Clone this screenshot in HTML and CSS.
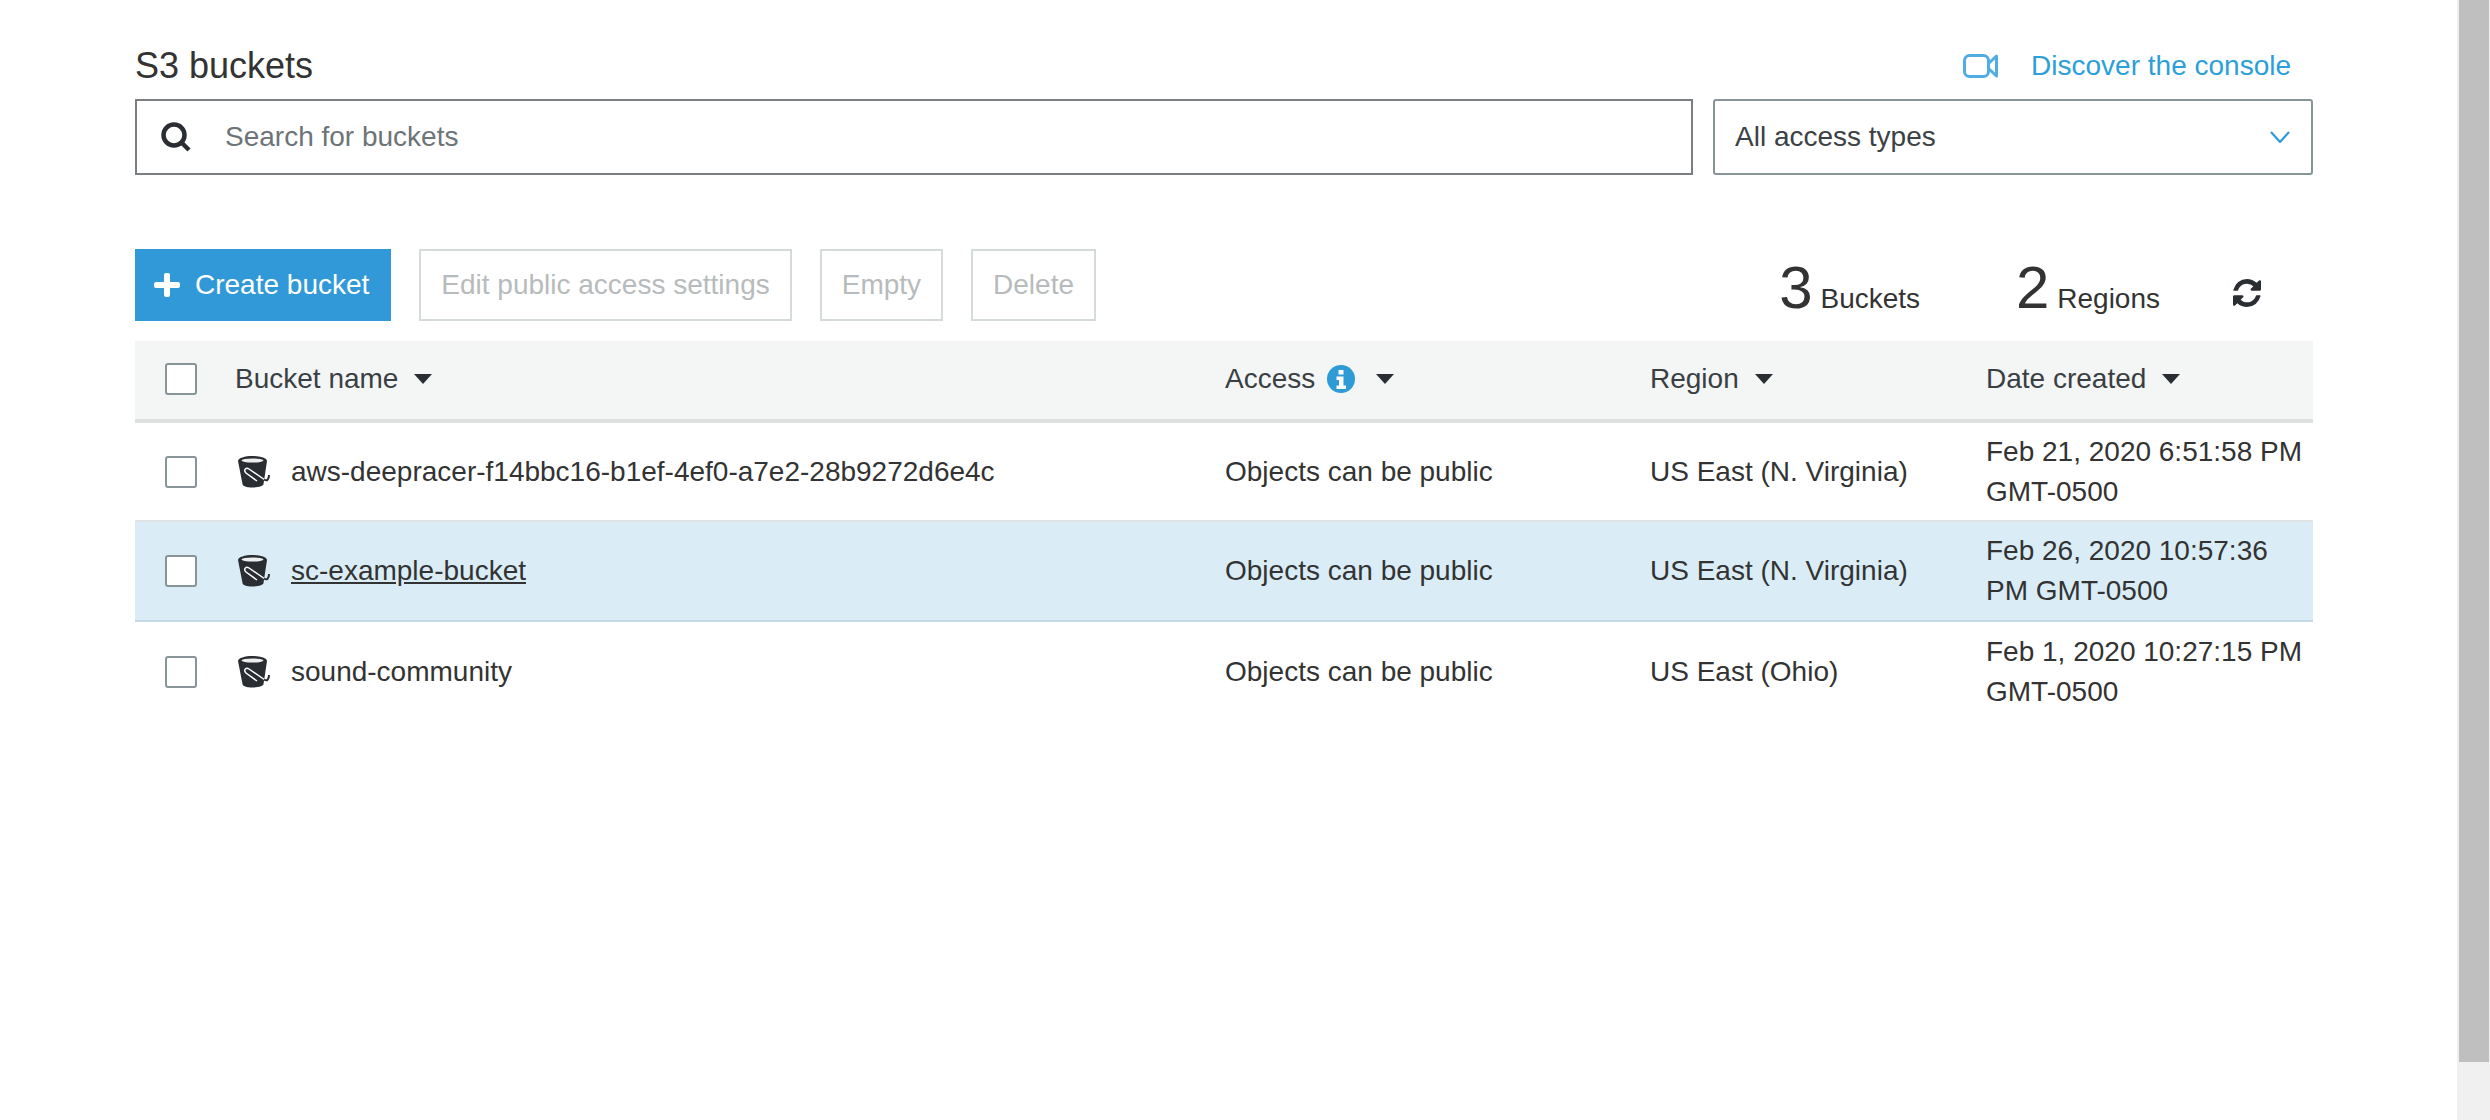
FILE: index.html
```html
<!DOCTYPE html>
<html lang="en">
<head>
    <meta charset="UTF-8">
    <link rel="stylesheet" href="styles.css">
    <title>S3 buckets</title>
</head>
<body>
    <main class="page">
        <div class="title-row">
            <h1 class="title">S3 buckets</h1>
            <a class="discover" href="#">
                <svg class="video-icon" viewBox="0 0 35 24" fill="none" stroke="#4fade2" stroke-width="3" stroke-linejoin="round">
                    <rect x="1.5" y="1.5" width="24" height="21" rx="5"/>
                    <path d="M33.500 2v20L25.500 14.500v-5z"/>
                </svg>
                Discover the console
            </a>
        </div>

        <div class="filters">
            <div class="search">
                <svg class="search-icon" viewBox="0 0 30 30" fill="none" stroke="#2a2e33">
                    <circle cx="13" cy="13" r="10.500" stroke-width="4.500"/>
                    <path d="M20 20l8 8" stroke-width="4.500"/>
                </svg>
                <input class="search-input" type="text" placeholder="Search for buckets">
            </div>
            <div class="select">
                <span>All access types</span>
                <svg class="chevron" viewBox="0 0 20 12" fill="none" stroke="#2e9ad6" stroke-width="2.200">
                    <path d="M1 1l9 10 9-10"/>
                </svg>
            </div>
        </div>

        <div class="toolbar">
            <button class="btn btn-primary">
                <svg class="plus-icon" viewBox="0 0 26 24" fill="#fff">
                    <path d="M10 2a2 2 0 0 1 2-2h2a2 2 0 0 1 2 2v7h8a2 2 0 0 1 2 2v2a2 2 0 0 1-2 2h-8v7a2 2 0 0 1-2 2h-2a2 2 0 0 1-2-2v-7H2a2 2 0 0 1-2-2v-2a2 2 0 0 1 2-2h8z"/>
                </svg>
                Create bucket
            </button>
            <button class="btn" disabled>Edit public access settings</button>
            <button class="btn" disabled>Empty</button>
            <button class="btn" disabled>Delete</button>
            <div class="stats">
                <div class="stat stat-buckets"><span class="stat-num">3</span> Buckets</div>
                <div class="stat stat-regions"><span class="stat-num">2</span> Regions</div>
                <svg class="refresh-icon" viewBox="128 128 1536 1536" fill="#2a2e33">
                    <path d="M1639 1056q0 5-1 7-64 268-268 434.500t-478 166.500q-146 0-282.500-55t-243.500-157l-129 129q-19 19-45 19t-45-19-19-45v-448q0-26 19-45t45-19h448q26 0 45 19t19 45-19 45l-137 137q71 66 161 102t187 36q134 0 250-65t186-179q11-17 53-117 8-23 30-23h192q13 0 22.500 9.500t9.500 22.500zm25-800v448q0 26-19 45t-45 19h-448q-26 0-45-19t-19-45 19-45l138-138q-148-137-349-137-134 0-250 65t-186 179q-11 17-53 117-8 23-30 23h-199q-13 0-22.500-9.500t-9.500-22.500v-7q65-268 270-434.500t480-166.500q146 0 284 55.500t245 156.500l130-129q19-19 45-19t45 19 19 45z"/>
                </svg>
            </div>
        </div>

        <div class="table">
            <div class="row row-head">
                <div class="cell-check"><span class="checkbox"></span></div>
                <div class="head-cell"><span>Bucket name</span><span class="caret"></span></div>
                <div class="head-cell">
                    <span>Access</span>
                    <svg class="info-icon" viewBox="0 0 28 28">
                        <circle cx="14" cy="14" r="14" fill="#2e9ad6"/>
                        <path fill="#fff" d="M11.500 5h5v4.500h-5zM9.500 11.500h7v9h2.500V24H9.500v-3.500H12v-5.500H9.500z"/>
                    </svg>
                    <span class="caret caret-info"></span>
                </div>
                <div class="head-cell"><span>Region</span><span class="caret"></span></div>
                <div class="head-cell"><span>Date created</span><span class="caret"></span></div>
            </div>

            <div class="row">
                <div class="cell-check"><span class="checkbox"></span></div>
                <div class="name-cell">
                    <svg class="bucket-icon" viewBox="0 0 32 32"><use href="#bucket"/></svg>
                    <span>aws-deepracer-f14bbc16-b1ef-4ef0-a7e2-28b9272d6e4c</span>
                </div>
                <div>Objects can be public</div>
                <div>US East (N. Virginia)</div>
                <div>Feb 21, 2020 6:51:58 PM GMT-0500</div>
            </div>

            <div class="row row-selected">
                <div class="cell-check"><span class="checkbox"></span></div>
                <div class="name-cell">
                    <svg class="bucket-icon" viewBox="0 0 32 32"><use href="#bucket"/></svg>
                    <a class="bucket-link" href="#">sc-example-bucket</a>
                </div>
                <div>Objects can be public</div>
                <div>US East (N. Virginia)</div>
                <div>Feb 26, 2020 10:57:36 PM GMT-0500</div>
            </div>

            <div class="row row-last">
                <div class="cell-check"><span class="checkbox"></span></div>
                <div class="name-cell">
                    <svg class="bucket-icon" viewBox="0 0 32 32"><use href="#bucket"/></svg>
                    <span>sound-community</span>
                </div>
                <div>Objects can be public</div>
                <div>US East (Ohio)</div>
                <div>Feb 1, 2020 10:27:15 PM GMT-0500</div>
            </div>
        </div>
    </main>

    <div class="scrollbar"><div class="scrollbar-thumb"></div></div>

    <svg class="defs" width="0" height="0">
        <symbol id="bucket" viewBox="0 0 32 32">
            <path fill="#2a2e33" d="M0 5C0 2 7 0 14.500 0S29 2 29 5l-3.500 23c0 2-5 3.500-11 3.500S4.500 30 4.500 28z"/>
            <ellipse cx="14.500" cy="4.500" rx="11" ry="2" fill="#eee"/>
            <path fill="none" stroke="#fff" stroke-width="1.500" d="M27 24L11 13c-3-2-6 1-3 4l11 8"/>
            <path fill="none" stroke="#2a2e33" stroke-width="2" d="M26 23.500c3 2 5 0 5-4.500"/>
        </symbol>
    </svg>
</body>
</html>
```

FILE: styles.css
```css
* {
    box-sizing: border-box;
}
body {
    margin: 0;
    height: 1120px;
    display: flex;
    overflow: hidden;
    background-color: #fff;
    color: #333;
    font-family: "Liberation Sans", Arial, sans-serif;
    font-size: 28px;
}
.page {
    flex: 1;
    padding: 0 144px 0 135px;
}
.defs {
    display: none;
}

/* title */
.title-row {
    height: 99px;
    padding: 42px 22px 0 0;
    display: flex;
    justify-content: space-between;
    align-items: flex-start;
}
.title {
    margin: 0;
    font-size: 36px;
    font-weight: normal;
    line-height: 48px;
}
.discover {
    display: flex;
    align-items: center;
    gap: 33px;
    color: #2b9fd8;
    text-decoration: none;
    line-height: 48px;
}
.video-icon {
    width: 35px;
    height: 24px;
}

/* search + select */
.filters {
    display: flex;
    gap: 20px;
    height: 76px;
}
.search {
    flex: 1;
    display: flex;
    align-items: center;
    border: 2px solid #7b7f82;
    padding-left: 24px;
}
.search-icon {
    width: 30px;
    height: 30px;
    margin-right: 32px;
}
.search-input {
    flex: 1;
    border: none;
    outline: none;
    background: none;
    font: inherit;
    color: inherit;
}
.search-input::placeholder {
    color: #6d7478;
    opacity: 1;
}
.select {
    width: 600px;
    display: flex;
    align-items: center;
    justify-content: space-between;
    border: 2px solid #879596;
    border-radius: 3px;
    padding: 0 21px 0 20px;
    color: #3c4145;
}
.chevron {
    width: 20px;
    height: 12px;
}

/* buttons */
.toolbar {
    display: flex;
    align-items: flex-start;
    margin-top: 74px;
    height: 92px;
}
.btn {
    height: 72px;
    margin-right: 28px;
    padding: 0 20px;
    border: 2px solid #d5dbdb;
    background-color: #fff;
    color: #b7bbbc;
    font: inherit;
    white-space: nowrap;
}
.btn-primary {
    display: flex;
    align-items: center;
    gap: 15px;
    padding: 0 22px 0 19px;
    border: none;
    background-color: #3199d8;
    color: #fff;
}
.plus-icon {
    width: 26px;
    height: 24px;
}
.stats {
    flex: 1;
    display: flex;
    align-items: center;
    height: 72px;
    padding-top: 6px;
}
.stat {
    white-space: nowrap;
}
.stat-num {
    font-size: 60px;
    line-height: 56px;
}
.stat-buckets {
    margin-left: auto;
}
.stat-regions {
    margin-left: 96px;
}
.refresh-icon {
    width: 28px;
    height: 28px;
    margin: 10px 52px 0 73px;
}

/* table */
.row {
    display: grid;
    grid-template-columns: 100px 990px 425px 336px 1fr;
    align-items: center;
    height: 99px;
    border-bottom: 2px solid #dfe3e3;
    line-height: 40px;
}
.row-head {
    height: 82px;
    padding-bottom: 2px;
    background-color: #f4f6f6;
    border-bottom: 4px solid #dedfdf;
}
.row-selected {
    height: 100px;
    background-color: #daedf7;
    border-bottom-color: #c7dbe6;
}
.row-last {
    border-bottom: none;
}
.cell-check {
    padding-left: 30px;
    display: flex;
}
.checkbox {
    width: 32px;
    height: 32px;
    background-color: #fff;
    border: 2px solid #879596;
    border-radius: 3px;
}
.head-cell {
    display: flex;
    align-items: center;
    color: #3a3f44;
}
.caret {
    width: 0;
    height: 0;
    margin-left: 16px;
    border-left: 9px solid transparent;
    border-right: 9px solid transparent;
    border-top: 10px solid #2a2e33;
}
.caret-info {
    margin-left: 21px;
}
.info-icon {
    width: 28px;
    height: 28px;
    margin-left: 12px;
}
.name-cell {
    display: flex;
    align-items: center;
    gap: 21px;
    margin-left: 3px;
}
.bucket-icon {
    width: 32px;
    height: 32px;
}
.bucket-link {
    color: inherit;
}

/* scrollbar */
.scrollbar {
    width: 33px;
    height: 100%;
    background-color: #f0f0f0;
    padding: 0 1px 0 2px;
}
.scrollbar-thumb {
    height: 1062px;
    background-color: #bfbfbf;
}
```
